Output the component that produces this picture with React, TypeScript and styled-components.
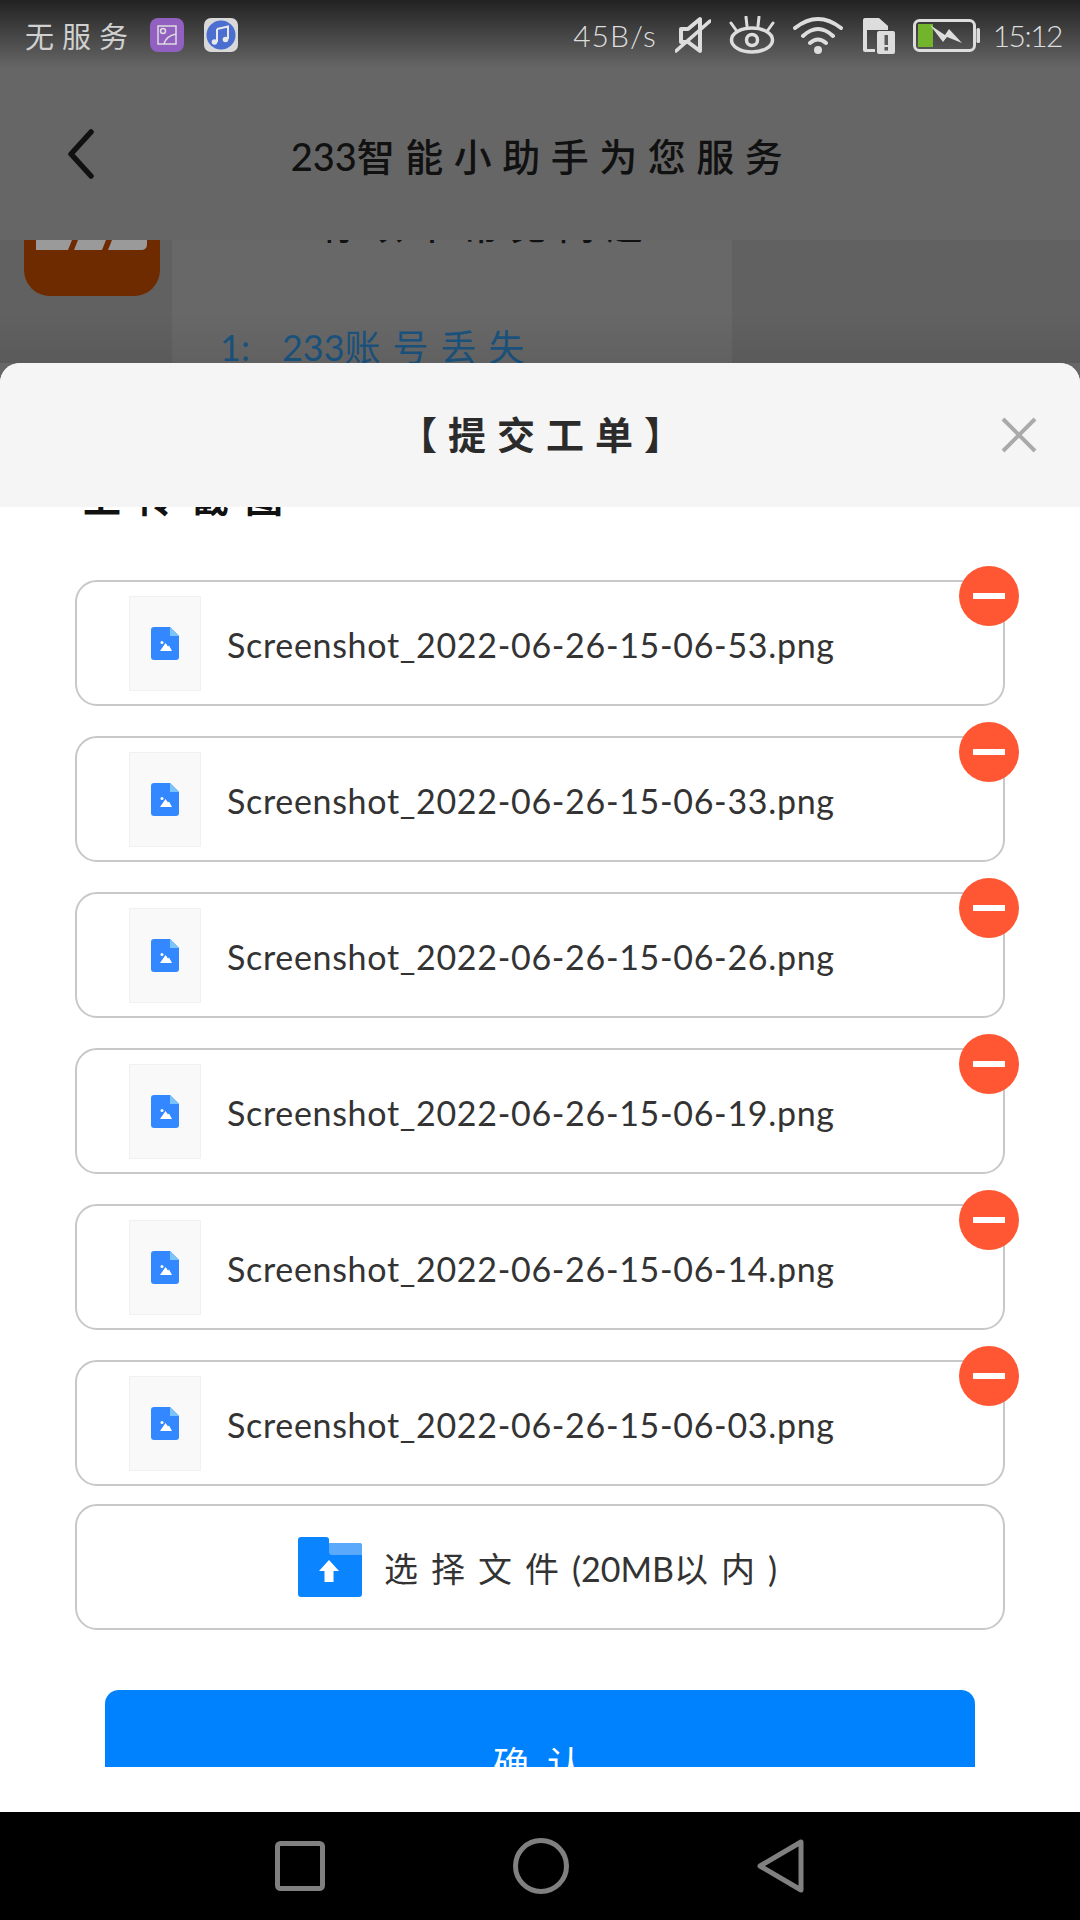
import React from "react";
import styled, { createGlobalStyle } from "styled-components";

const Global = createGlobalStyle`
  html, body { margin: 0; padding: 0; background: #000; }
  body { font-family: Lato, "Noto Sans CJK SC", sans-serif; }
  * { box-sizing: border-box; }
`;

const Page = styled.div`
  width: 1080px;
  height: 1920px;
  display: flex;
  flex-direction: column;
  overflow: hidden;
  background: #666;
`;

const StatusBar = styled.div`
  height: 68px;
  flex: none;
  display: flex;
  align-items: center;
  justify-content: space-between;
  padding: 2px 18px 0 25px;
  background: linear-gradient(#222, #666);
`;
const StatusGroup = styled.div`
  display: flex;
  align-items: center;
  gap: ${(p: { $gap: number }) => p.$gap}px;
`;
const Carrier = styled.span`
  font-size: 29px;
  letter-spacing: 8px;
  color: #d0d0d0;
  margin-right: -6px;
`;
const StatusText = styled.span<{ $track: number }>`
  font-size: 30px;
  font-weight: 300;
  color: #ddd;
  line-height: 38px;
  letter-spacing: ${(p) => p.$track}px;
`;
const ClockText = styled(StatusText)`
  margin-left: -5px;
`;

const Header = styled.div`
  height: 172px;
  flex: none;
  display: grid;
  grid-template-columns: 1fr auto 1fr;
  align-items: center;
  padding: 0 68px;
`;
const Title = styled.div`
  font-size: 38px;
  font-weight: 500;
  letter-spacing: 10.5px;
  color: #111;
  padding-left: 4px;
`;
const Tight = styled.span`
  letter-spacing: 0;
`;
const Ordinal = styled.span`
  letter-spacing: 0;
  margin-right: 32px;
`;

const Chat = styled.div`
  position: relative;
  height: 123px;
  flex: none;
  display: flex;
  overflow: hidden;
  background: #616161;
  &::after {
    content: "";
    position: absolute;
    left: 0;
    right: 0;
    bottom: 0;
    height: 50px;
    background: linear-gradient(rgba(0, 0, 0, 0), rgba(0, 0, 0, 0.07));
  }
`;
const AvatarCol = styled.div`
  width: 172px;
  flex: none;
  padding-left: 24px;
`;
const Bubble = styled.div`
  width: 560px;
  flex: none;
  background: #686868;
  padding-left: 48px;
`;
const BubbleLine = styled.div`
  font-size: 36px;
  font-weight: 500;
  line-height: 50px;
  letter-spacing: 12px;
  margin-top: -39px;
  color: #111;
  white-space: nowrap;
`;
const BubbleLink = styled.div`
  font-size: 36px;
  line-height: 50px;
  letter-spacing: 12px;
  margin-top: 71px;
  color: #1b5480;
  white-space: nowrap;
`;

const Sheet = styled.div`
  flex: 1;
  min-height: 0;
  display: flex;
  flex-direction: column;
  background: #fff;
  border-radius: 20px 20px 0 0;
  overflow: hidden;
`;
const SheetHeader = styled.div`
  height: 144px;
  flex: none;
  position: relative;
  z-index: 1;
  display: grid;
  grid-template-columns: 1fr auto 1fr;
  align-items: center;
  background: #f5f5f5;
  padding: 0 43px;
`;
const SheetTitle = styled.div`
  grid-column: 2;
  font-size: 38px;
  font-weight: 700;
  letter-spacing: 11px;
  color: #2b2b2b;
  padding: 0 0 5px 12px;
`;
const CloseIcon = styled.svg`
  justify-self: end;
  width: 36px;
  height: 36px;
`;

const Scroll = styled.div`
  flex: 1;
  min-height: 0;
  overflow: hidden;
  padding: 0 75px;
`;
const SectionTitle = styled.div`
  font-size: 38px;
  font-weight: 700;
  line-height: 50px;
  letter-spacing: 16px;
  color: #111;
  margin: -35px 0 58px 8px;
`;
const List = styled.div`
  display: flex;
  flex-direction: column;
  gap: 30px;
`;
const Row = styled.div`
  position: relative;
  height: 126px;
  display: flex;
  align-items: center;
  padding-left: 52px;
  background: #fff;
  border: 2px solid #c8c8c8;
  border-radius: 22px;
`;
const Thumb = styled.div`
  width: 72px;
  height: 95px;
  flex: none;
  display: flex;
  align-items: center;
  justify-content: center;
  background: #f9f9f9;
  border: 1px solid #f1f1f1;
`;
const FileName = styled.span`
  margin: 3px 0 0 26px;
  font-size: 34px;
  letter-spacing: 0.68px;
  color: #333;
  white-space: nowrap;
`;
const Remove = styled.div`
  position: absolute;
  top: -16px;
  right: -16px;
  width: 60px;
  height: 60px;
  border-radius: 50%;
  background: #ff5733;
  display: flex;
  align-items: center;
  justify-content: center;
  &::before {
    content: "";
    width: 32px;
    height: 6px;
    background: #fff;
  }
`;
const Picker = styled(Row)`
  margin-top: 18px;
  padding-left: 0;
  padding-right: 5px;
  justify-content: center;
  gap: 22px;
`;
const PickerLabel = styled.span`
  font-size: 34px;
  letter-spacing: 13px;
  color: #333;
  white-space: nowrap;
`;
const ConfirmClip = styled.div`
  height: 77px;
  margin: 60px 30px 0;
  overflow: hidden;
  border-radius: 14px 14px 0 0;
`;
const Confirm = styled.div`
  height: 144px;
  display: flex;
  align-items: center;
  justify-content: center;
  padding-left: 14px;
  background: #0082ff;
  color: #fff;
  font-size: 36px;
  letter-spacing: 18px;
`;

const NavBar = styled.div`
  height: 108px;
  flex: none;
  display: flex;
  align-items: center;
  justify-content: center;
  gap: 188px;
  padding-right: 2px;
  background: #000;
`;

const FileIcon = () => (
  <svg width="28" height="33" viewBox="0 0 28 33">
    <path d="M3 0H19L28 9V30a3 3 0 0 1-3 3H3a3 3 0 0 1-3-3V3a3 3 0 0 1 3-3Z" fill="#3388ff" />
    <path d="M19 0L28 9H19Z" fill="#7cc4f8" />
    <path d="M9 24L14.500 16L17 19.500L18 18.500L21 24Z" fill="#fff" />
    <circle cx="11" cy="15.500" r="1.500" fill="#fff" />
  </svg>
);

const FolderIcon = () => (
  <svg width="64" height="60" viewBox="0 0 64 60">
    <path d="M3 0H28a3 3 0 0 1 3 3V6H61a3 3 0 0 1 3 3V57a3 3 0 0 1-3 3H3a3 3 0 0 1-3-3V3a3 3 0 0 1 3-3Z" fill="#0a84ff" />
    <path d="M31 6H61a3 3 0 0 1 3 3V18H34a3 3 0 0 1-3-3Z" fill="#5aa9fb" />
    <path d="M31 23L41 34H35.500V45H26.500V34H21Z" fill="#fff" />
  </svg>
);

const LogoPiece = () => (
  <svg width="136" height="56" viewBox="0 0 136 56">
    <path d="M0 0H136V30a26 26 0 0 1-26 26H26A26 26 0 0 1 0 30Z" fill="#6f2b00" />
    <path d="M12 0H48L44 10H12ZM54 0H82L78 10H50ZM88 0H123V4Q123 10 117 10H84Z" fill="#9a9a9a" />
  </svg>
);

const GalleryIcon = () => (
  <svg width="34" height="34" viewBox="0 0 34 34">
    <rect width="34" height="34" rx="8" fill="#9160c0" />
    <rect x="8" y="8" width="18" height="18" fill="none" stroke="#ddd" strokeWidth="1.500" />
    <circle cx="13" cy="13" r="2.500" fill="none" stroke="#ddd" strokeWidth="1.500" />
    <path d="M14 26Q16 18 26 16" fill="none" stroke="#ddd" strokeWidth="1.500" />
  </svg>
);

const MusicIcon = () => (
  <svg width="34" height="34" viewBox="0 0 34 34">
    <rect width="34" height="34" rx="7" fill="#d9d9d9" />
    <circle cx="17" cy="17" r="14.500" fill="#4a6fd0" />
    <path d="M13 11L24 8.500V21M13 11V24" fill="none" stroke="#e8e8e8" strokeWidth="2" />
    <circle cx="10.500" cy="24" r="2.800" fill="#e8e8e8" />
    <circle cx="21.500" cy="21.500" r="2.800" fill="#e8e8e8" />
  </svg>
);

const MuteIcon = () => (
  <svg width="36" height="38" viewBox="0 0 36 38">
    <path d="M6 13H13L25 3V35L13 26H6Z" fill="none" stroke="#ddd" strokeWidth="4" strokeLinejoin="round" />
    <path d="M1 35L35 5" stroke="#ddd" strokeWidth="3.500" strokeLinecap="round" />
  </svg>
);

const EyeIcon = () => (
  <svg width="46" height="38" viewBox="0 0 46 38">
    <ellipse cx="23" cy="24" rx="20.500" ry="12" fill="none" stroke="#ddd" strokeWidth="3.500" />
    <circle cx="23" cy="24" r="5.500" fill="none" stroke="#ddd" strokeWidth="3.500" />
    <path d="M2 7L7 14M17 1L18 10M30 1L29 10M44 7L39 14" stroke="#ddd" strokeWidth="3" strokeLinecap="round" />
  </svg>
);

const WifiIcon = () => (
  <svg width="50" height="38" viewBox="0 0 50 38">
    <path d="M2 12Q25 -6 48 12M10 20Q25 6 40 20M17 27Q25 20 33 27" fill="none" stroke="#ddd" strokeWidth="4" strokeLinecap="round" />
    <circle cx="25" cy="34" r="4" fill="#ddd" />
  </svg>
);

const SimIcon = () => (
  <svg width="34" height="38" viewBox="0 0 34 38">
    <path d="M4 2H18L27 10V14H6V33H14V36H4a2 2 0 0 1-2-2V4a2 2 0 0 1 2-2Z" fill="#ddd" />
    <rect x="16" y="15" width="18" height="23" rx="2" fill="#ddd" />
    <rect x="23.500" y="19" width="3.500" height="10" fill="#5a5a5a" />
    <rect x="23.500" y="31" width="3.500" height="3.500" fill="#5a5a5a" />
  </svg>
);

const BatteryIcon = () => (
  <svg width="67" height="33" viewBox="0 0 67 33">
    <rect x="1.500" y="1.500" width="60" height="30" rx="5" fill="none" stroke="#ddd" strokeWidth="3" />
    <rect x="63.500" y="9" width="3.500" height="15" rx="1.500" fill="#ddd" />
    <rect x="5" y="5" width="15" height="23" fill="#72b52d" />
    <path d="M17 6L32 16L36 10L49 24L34 18L30 23Z" fill="#ddd" />
  </svg>
);

const files = ["53", "33", "26", "19", "14", "03"];

export default function App() {
  return (
    <Page>
      <Global />
      <StatusBar>
        <StatusGroup $gap={20}>
          <Carrier>无服务</Carrier>
          <GalleryIcon />
          <MusicIcon />
        </StatusGroup>
        <StatusGroup $gap={18}>
          <StatusText $track={1}>45B/s</StatusText>
          <MuteIcon />
          <EyeIcon />
          <WifiIcon />
          <SimIcon />
          <BatteryIcon />
          <ClockText $track={-1.5}>15:12</ClockText>
        </StatusGroup>
      </StatusBar>
      <Header>
        <svg width="26" height="50" viewBox="0 0 26 50">
          <path d="M23 3L3 25L23 47" fill="none" stroke="#111" strokeWidth="5.500" strokeLinecap="round" strokeLinejoin="round" />
        </svg>
        <Title>
          <Tight>233</Tight>智能小助手为您服务
        </Title>
      </Header>
      <Chat>
        <AvatarCol>
          <LogoPiece />
        </AvatarCol>
        <Bubble>
          <BubbleLine>233有以下常见问题：</BubbleLine>
          <BubbleLink>
            <Ordinal>1:</Ordinal>
            <Tight>233</Tight>账号丢失
          </BubbleLink>
        </Bubble>
      </Chat>
      <Sheet>
        <SheetHeader>
          <SheetTitle>【提交工单】</SheetTitle>
          <CloseIcon viewBox="0 0 36 36">
            <path d="M2 2L34 34M34 2L2 34" stroke="#aaa" strokeWidth="4" />
          </CloseIcon>
        </SheetHeader>
        <Scroll>
          <SectionTitle>上传截图</SectionTitle>
          <List>
            {files.map((f) => (
              <Row key={f}>
                <Thumb>
                  <FileIcon />
                </Thumb>
                <FileName>{`Screenshot_2022-06-26-15-06-${f}.png`}</FileName>
                <Remove />
              </Row>
            ))}
          </List>
          <Picker>
            <FolderIcon />
            <PickerLabel>
              选择文件<Tight>(20MB</Tight>以内<Tight>)</Tight>
            </PickerLabel>
          </Picker>
          <ConfirmClip>
            <Confirm>确认</Confirm>
          </ConfirmClip>
        </Scroll>
      </Sheet>
      <NavBar>
        <svg width="50" height="50" viewBox="0 0 50 50">
          <rect x="2.500" y="2.500" width="45" height="45" rx="3" fill="none" stroke="#808080" strokeWidth="5" />
        </svg>
        <svg width="56" height="56" viewBox="0 0 56 56">
          <circle cx="28" cy="28" r="25.500" fill="none" stroke="#808080" strokeWidth="5" />
        </svg>
        <svg width="47" height="54" viewBox="0 0 47 54">
          <path d="M44 3V51L3 27Z" fill="none" stroke="#808080" strokeWidth="5" strokeLinejoin="round" />
        </svg>
      </NavBar>
    </Page>
  );
}
